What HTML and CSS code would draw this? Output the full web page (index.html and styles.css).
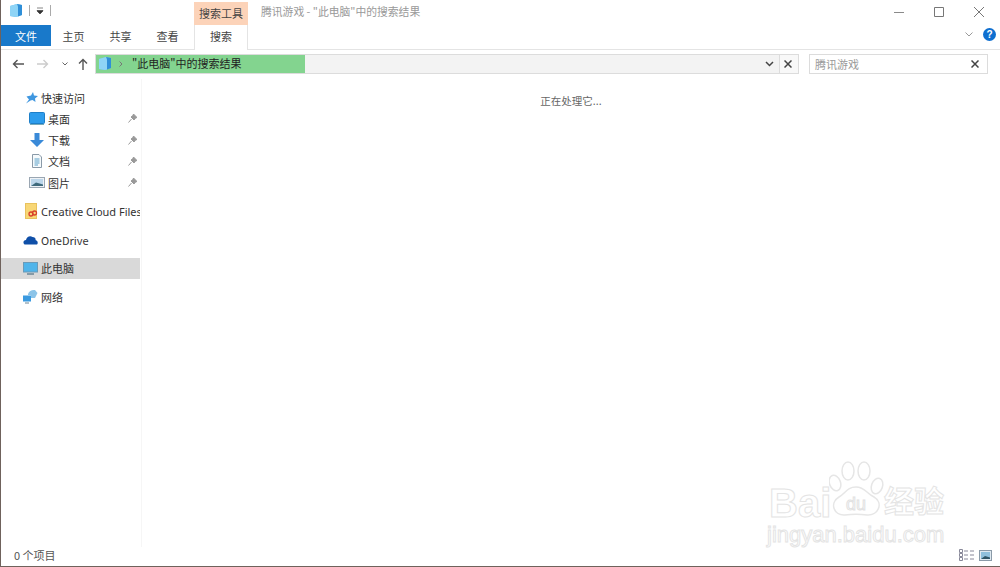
FILE: index.html
```html
<!doctype html>
<html lang="zh">
	<head>
		<meta charset="utf-8" />
		<title>腾讯游戏 - "此电脑"中的搜索结果</title>
		<link rel="stylesheet" href="styles.css">
	</head>
	<body>
		<div class="window">
			<header class="titlebar">
				<div class="quick">
					<svg class="cube" width="14" height="15" viewBox="0 0 14 15">
						<path d="M1 3 8 1 13 2V12L7 14 1 13Z" fill="#6fc0ee"/>
						<path d="M8 1 13 2V12L9 13.400Z" fill="#2f8fd8"/>
						<path d="M1 3 8 1 9 3.500V13.400L7 14 1 13Z" fill="#8ed4f6"/>
					</svg>
					<span class="sep"></span>
					<svg width="8" height="8" viewBox="0 0 8 8"><path d="M1 1H7M1 3.500H7V4L4 7 1 4Z" fill="#333" stroke="#333" stroke-width=".6"/></svg>
					<span class="sep"></span>
				</div>
				<div class="context-tab">搜索工具</div>
				<div class="title">腾讯游戏 - "此电脑"中的搜索结果</div>
				<div class="controls">
					<svg width="10" height="10" viewBox="0 0 10 10"><path d="M0 5.500H10" stroke="#8a8a8a"/></svg>
					<svg width="10" height="10" viewBox="0 0 10 10"><path d="M.5.500H9.500V9.500H.5Z" fill="none" stroke="#777"/></svg>
					<svg width="10" height="10" viewBox="0 0 10 10"><path d="M0 0 10 10M10 0 0 10" stroke="#777"/></svg>
				</div>
			</header>

			<nav class="ribbon">
				<div class="tab tab-file">文件</div>
				<div class="tab">主页</div>
				<div class="tab">共享</div>
				<div class="tab">查看</div>
				<div class="tab tab-search">搜索</div>
				<div class="ribbon-right">
					<svg width="8" height="5" viewBox="0 0 8 5"><path d="M.5.500 4 4 7.500.5" fill="none" stroke="#999"/></svg>
					<span class="help">?</span>
				</div>
			</nav>

			<div class="addressbar">
				<div class="nav-buttons">
					<svg width="12" height="10" viewBox="0 0 12 10"><path d="M12 5H1.500M5.500 1 1.500 5 5.500 9" fill="none" stroke="#555" stroke-width="1.400"/></svg>
					<svg width="12" height="10" viewBox="0 0 12 10"><path d="M0 5H10.500M6.500 1 10.500 5 6.500 9" fill="none" stroke="#ccc" stroke-width="1.400"/></svg>
					<svg width="6" height="4" viewBox="0 0 6 4"><path d="M.5.500 3 3 5.500.5" fill="none" stroke="#666"/></svg>
					<svg class="nav-up" width="10" height="12" viewBox="0 0 10 12"><path d="M5 12V1.500M1 5.500 5 1.500 9 5.500" fill="none" stroke="#555" stroke-width="1.400"/></svg>
				</div>
				<div class="address">
					<div class="progress">
						<svg class="cube" width="14" height="15" viewBox="0 0 14 15">
							<path d="M1 3 8 1 13 2V12L7 14 1 13Z" fill="#6fc0ee"/>
							<path d="M8 1 13 2V12L9 13.400Z" fill="#2f8fd8"/>
							<path d="M1 3 8 1 9 3.500V13.400L7 14 1 13Z" fill="#8ed4f6"/>
						</svg>
						<svg class="crumb" width="4" height="6" viewBox="0 0 4 6"><path d="M.5.500 3 3 .5 5.500" fill="none" stroke="#777"/></svg>
						<span>"此电脑"中的搜索结果</span>
					</div>
					<div class="address-end">
						<svg width="9" height="6" viewBox="0 0 9 6"><path d="M1 1 4.500 4.500 8 1" fill="none" stroke="#444" stroke-width="1.500"/></svg>
						<span class="address-stop">
							<svg width="8" height="8" viewBox="0 0 8 8"><path d="M.5.500 7.500 7.500M7.500.5 .5 7.500" stroke="#444" stroke-width="1.500"/></svg>
						</span>
					</div>
				</div>
				<div class="searchbox">
					<span>腾讯游戏</span>
					<svg width="8" height="8" viewBox="0 0 8 8"><path d="M.5.500 7.500 7.500M7.500.5 .5 7.500" stroke="#444" stroke-width="1.500"/></svg>
				</div>
			</div>

			<div class="main">
				<aside class="sidebar">
					<section class="group">
						<div class="item">
							<svg class="nudge" width="13" height="12" viewBox="0 0 13 12"><path d="M8 0 9 3.500 13 4 10 6.500 10.500 10 7.500 8 5.500 8.500 1 11.500 4 7.500 1.500 4.500 6 3.500Z" fill="#3f97e0"/></svg>
							<span>快速访问</span>
						</div>
						<div class="item sub">
							<svg width="16" height="13" viewBox="0 0 16 13"><rect width="15" height="11" x=".5" y=".5" rx="1" fill="#2d9cec" stroke="#1e7fc8"/><path d="M1 12.500H15" stroke="#7ab" /></svg>
							<span>桌面</span>
							<svg class="pin" width="9" height="9" viewBox="0 0 9 9"><path d="M5.500 0 9 3.500 7.500 4 6 6 3 3 5 1.500ZM3.500 5 .5 8.500" fill="#999" stroke="#999"/></svg>
						</div>
						<div class="item sub">
							<svg width="16" height="16" viewBox="0 0 16 16"><path d="M5.500 1H10.500V8H15L8 15 1 8H5.500Z" fill="#3a8ad8"/></svg>
							<span>下载</span>
							<svg class="pin" width="9" height="9" viewBox="0 0 9 9"><path d="M5.500 0 9 3.500 7.500 4 6 6 3 3 5 1.500ZM3.500 5 .5 8.500" fill="#999" stroke="#999"/></svg>
						</div>
						<div class="item sub">
							<svg width="16" height="16" viewBox="0 0 16 16"><path d="M3.500 1.500H10L12.500 4V14.500H3.500Z" fill="#f6fafc" stroke="#8a9aa8"/><path d="M5.500 6H10.500M5.500 8H10.500M5.500 10H10.500M5.500 12H9" stroke="#5aa0c8"/></svg>
							<span>文档</span>
							<svg class="pin" width="9" height="9" viewBox="0 0 9 9"><path d="M5.500 0 9 3.500 7.500 4 6 6 3 3 5 1.500ZM3.500 5 .5 8.500" fill="#999" stroke="#999"/></svg>
						</div>
						<div class="item sub">
							<svg width="16" height="13" viewBox="0 0 16 13"><rect x=".5" y="1.500" width="15" height="10" fill="#eef2f6" stroke="#9aa6b2"/><rect x="2" y="3" width="12" height="7" fill="#bcd6ea"/><path d="M2 10 7 6.500 14 8.500V10Z" fill="#3f6a7c"/></svg>
							<span>图片</span>
							<svg class="pin" width="9" height="9" viewBox="0 0 9 9"><path d="M5.500 0 9 3.500 7.500 4 6 6 3 3 5 1.500ZM3.500 5 .5 8.500" fill="#999" stroke="#999"/></svg>
						</div>
					</section>
					<section class="group">
						<div class="item">
							<svg class="nudge" width="13" height="16" viewBox="0 0 13 16"><rect x=".5" y=".5" width="11" height="15" fill="#f8d776" stroke="#e8c25e"/><circle cx="6" cy="11" r="2" fill="none" stroke="#d8402c" stroke-width="1.300"/><circle cx="9.500" cy="10" r="2" fill="none" stroke="#d8402c" stroke-width="1.300"/></svg>
							<span class="clip">Creative Cloud Files</span>
						</div>
					</section>
					<section class="group">
						<div class="item">
							<svg width="15" height="10" viewBox="0 0 15 10"><path d="M1.500 9.500C-.5 8 .5 5 3 5 3.500 2 7 0 9.500 2 12 2 13 4 12.500 5 14.500 5.500 15.500 8 14 9.500Z" fill="#0f4fa8"/></svg>
							<span>OneDrive</span>
						</div>
					</section>
					<section class="group">
						<div class="item active">
							<svg width="15" height="13" viewBox="0 0 15 13"><rect x=".5" y=".5" width="14" height="9.500" fill="#4fb4ea" stroke="#6a9ab8"/><path d="M4 12H11" stroke="#6a8494" stroke-width="1.500"/></svg>
							<span>此电脑</span>
						</div>
					</section>
					<section class="group">
						<div class="item">
							<svg width="15" height="15" viewBox="0 0 15 15"><rect x="0" y="6.500" width="8" height="6" fill="#3a9ae0"/><path d="M2 14H6" stroke="#6a8494"/><path d="M5 5C6 2 9 .5 12 1L14.500 4 12 9H8V6H5Z" fill="#8cc4e8"/></svg>
							<span>网络</span>
						</div>
					</section>
				</aside>
				<main class="content">
					<p class="status-msg">正在处理它...</p>
				</main>
			</div>

			<footer class="statusbar">
				<span>0 个项目</span>
				<div class="views">
					<svg width="15" height="12" viewBox="0 0 15 12"><path d="M.5.500H3.500V3.500H.5ZM.5 4.500H3.500V7.500H.5ZM.5 8.500H3.500V11.500H.5Z" fill="#fff" stroke="#889"/><path d="M5 2H9M11 2H15M5 6H9M11 6H15M5 10H9M11 10H15" stroke="#889"/></svg>
					<svg width="13" height="11" viewBox="0 0 13 11"><rect x=".5" y=".5" width="12" height="10" fill="#dfe9f0" stroke="#8a9aa8"/><rect x="2" y="2" width="9" height="7" fill="#8fc0dc"/><path d="M2 9 6 6 11 7.500V9Z" fill="#2f5566"/></svg>
				</div>
			</footer>

			<div class="watermark">
				<svg class="paw" width="58" height="60" viewBox="0 0 58 60">
					<g fill="#fff" stroke="#e6e6e6" stroke-width="1.500">
						<ellipse cx="6" cy="23" rx="5.500" ry="8" transform="rotate(-20 6 23)"/>
						<ellipse cx="19" cy="11" rx="6" ry="9"/>
						<ellipse cx="35" cy="11" rx="6" ry="9"/>
						<ellipse cx="48" cy="26" rx="5.500" ry="8" transform="rotate(20 48 26)"/>
						<path d="M27 27C36 27 37 33 45 37 55 43 49 56 38 55 30 54 24 54 16 55 5 56 0 43 10 37 17 33 18 27 27 27Z"/>
					</g>
					<text x="27" y="50" text-anchor="middle" class="paw-du">du</text>
				</svg>
				<span class="wm-bai">Bai</span>
				<span class="wm-cn">经验</span>
				<span class="wm-url">jingyan.baidu.com</span>
			</div>
		</div>
	</body>
</html>
```

FILE: styles.css
```css
* {
	box-sizing: border-box;
}

html {
	--font-main: "Noto Sans CJK SC", "Noto Sans", sans-serif;
	--color-fg: #333;
	--color-border: #e4e4e4;
	--color-blue: #1979ca;
}

body {
	margin: 0;
	font-family: var(--font-main);
	font-size: 11px;
	color: var(--color-fg);
	background: #fff;
}

.window {
	position: relative;
	display: flex;
	flex-direction: column;
	height: 567px;
	overflow: hidden;
	border-left: 1px solid #6f625c;
	border-bottom: 1px solid #6f625c;
}

svg {
	display: block;
	flex: none;
}

/* title bar */

.titlebar {
	display: flex;
	height: 25px;
	flex: none;
}

.quick {
	display: flex;
	align-items: center;
	gap: 6px;
	width: 193px;
	padding: 0 0 4px 8px;
}

.sep {
	width: 1px;
	height: 11px;
	background: #aaa;
}

.context-tab {
	width: 54px;
	margin-top: 2px;
	padding-top: 3px;
	text-align: center;
	background: #fcd3b9;
	color: #444;
}

.title {
	flex: 1;
	padding: 3px 0 0 13px;
	color: #999;
	font-size: 10.800px;
}

.controls {
	display: flex;
	align-items: flex-start;
	gap: 30px;
	padding: 7px 16px 0 0;
}

/* ribbon */

.ribbon {
	display: flex;
	height: 25px;
	flex: none;
	border-bottom: 1px solid var(--color-border);
}

.tab {
	width: 47px;
	padding-top: 3px;
	text-align: center;
	color: #444;
}

.tab-file {
	width: 50px;
	height: 21px;
	padding-top: 3px;
	margin-right: -1px;
	background: var(--color-blue);
	color: #fff;
}

.tab-search {
	width: 54px;
	margin-left: 3px;
	margin-bottom: -1px;
	background: #fff;
	border: 1px solid var(--color-border);
	border-top: none;
	border-bottom: none;
}

.ribbon-right {
	display: flex;
	align-items: center;
	gap: 10px;
	margin-left: auto;
	padding: 0 4px 5px 0;
}

.help {
	width: 13px;
	height: 13px;
	border-radius: 50%;
	background: #0f6fd0;
	color: #fff;
	font-weight: bold;
	font-size: 10px;
	line-height: 13px;
	text-align: center;
	font-family: "Liberation Sans", sans-serif;
}

/* address bar */

.addressbar {
	display: flex;
	align-items: center;
	height: 29px;
	flex: none;
	padding-bottom: 1px;
}

.nav-buttons {
	display: flex;
	align-items: center;
	gap: 13px;
	width: 94px;
	padding-left: 11px;
}

.nav-up {
	margin-left: -3px;
}

.address {
	display: flex;
	width: 704px;
	height: 20px;
	background: #f3f3f3;
	border: 1px solid #dcdcdc;
}

.progress {
	display: flex;
	align-items: center;
	width: 209px;
	padding: 0 0 2px 2px;
	background: #83d48f;
	color: #222;
}

.crumb {
	margin: 2px 9px 0 7px;
}

.address-end {
	display: flex;
	align-items: center;
	margin-left: auto;
	gap: 5px;
	padding-left: 5px;
}

.address-stop {
	display: flex;
	align-items: center;
	justify-content: center;
	width: 19px;
	height: 18px;
	border-left: 1px solid #dcdcdc;
	background: #f8f8f8;
	padding-right: 2px;
}

.searchbox {
	display: flex;
	align-items: center;
	justify-content: space-between;
	width: 179px;
	height: 20px;
	margin-left: 10px;
	padding: 0 8px 1px 5px;
	border: 1px solid #dcdcdc;
	color: #999;
}

/* sidebar */

.main {
	display: flex;
	flex: 1;
	min-height: 0;
}

.sidebar {
	width: 142px;
	padding-top: 8px;
	border-right: 1px solid #f6f6f6;
}

.group {
	margin-bottom: 7.250px;
}

.item {
	display: grid;
	grid-template-columns: 18px auto 1fr;
	align-items: center;
	width: 139px;
	height: 21.250px;
	padding-left: 22px;
	white-space: nowrap;
	overflow: hidden;
}

.item.sub {
	grid-template-columns: 19px auto 1fr;
	padding-left: 28px;
}

.item .pin {
	justify-self: end;
	margin-right: 3px;
}

.item .nudge {
	margin-left: 2px;
}

.item.active {
	background: #d9d9d9;
}

.clip {
	font-family: "Noto Sans", sans-serif;
}

.content {
	flex: 1;
}

.status-msg {
	margin: 14px 0 0;
	text-align: center;
	width: 858px;
	font-size: 10.500px;
	color: #666;
}

/* status bar */

.statusbar {
	display: flex;
	align-items: center;
	justify-content: space-between;
	height: 19px;
	flex: none;
	padding: 0 8px 3px 13px;
	color: #555;
}

.views {
	display: flex;
	align-items: center;
	gap: 5px;
}

/* site watermark */

.watermark {
	position: absolute;
	left: 764px;
	top: 458px;
	width: 190px;
	height: 90px;
	color: transparent;
	font-family: "Liberation Sans", sans-serif;
	-webkit-text-stroke: 1px #e4e4e4;
}

.paw {
	position: absolute;
	left: 64px;
	top: 2px;
}

.paw-du {
	font-size: 18px;
	fill: #fff;
	stroke: #e2e2e2;
	stroke-width: 1;
}

.wm-bai {
	position: absolute;
	left: 4px;
	top: 23px;
	font-size: 40px;
	font-weight: bold;
	line-height: 44px;
}

.wm-cn {
	position: absolute;
	left: 119px;
	top: 23px;
	font-size: 30px;
	line-height: 36px;
	font-family: var(--font-main);
	font-weight: bold;
}

.wm-url {
	position: absolute;
	left: 2px;
	top: 64px;
	font-size: 22px;
	line-height: 26px;
}
```
